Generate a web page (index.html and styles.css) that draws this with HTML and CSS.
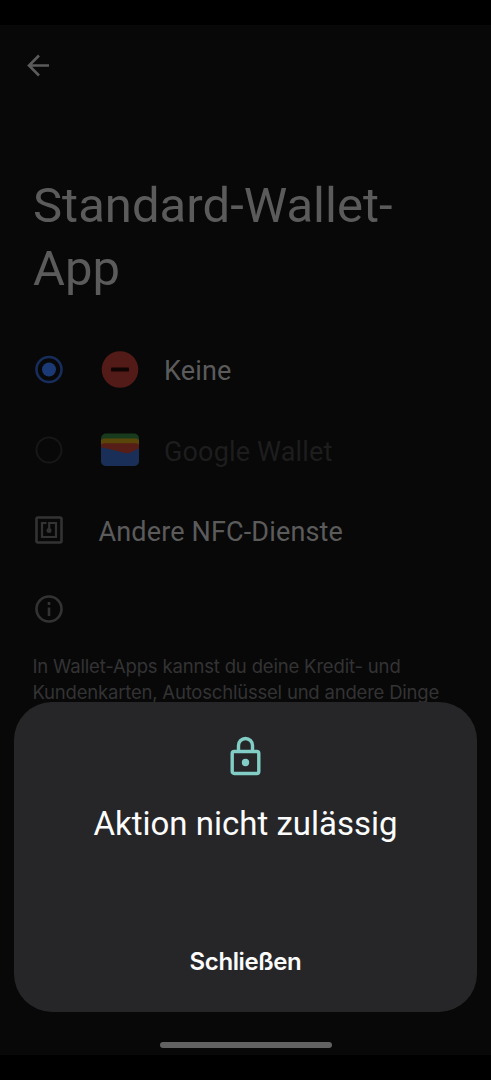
FILE: index.html
```html
<!DOCTYPE html>
<html lang="de">
<head>
<meta charset="utf-8">
<meta name="viewport" content="width=device-width, initial-scale=1">
<title>Standard-Wallet-App</title>
<link rel="stylesheet" href="styles.css">
</head>
<body>
<main class="screen">
  <header class="toolbar">
    <svg class="back" width="24" height="24" viewBox="0 0 24 24"><path d="M22 12.500H2.500M12 2.500 2 12.500 12 22.500"/></svg>
  </header>
  <h1 class="heading">Standard-Wallet-<br>App</h1>
  <ul class="options">
    <li class="row">
      <svg class="mark" width="28" height="28" viewBox="0 0 28 28"><circle class="radio-ring" cx="14" cy="13.500" r="12.500"/><circle class="radio-dot" cx="14" cy="13.500" r="7"/></svg>
      <svg class="app" width="40" height="40" viewBox="0 0 40 40"><circle cx="20" cy="19.500" r="18.300" fill="#531b17"/><rect x="11" y="17.500" width="18" height="4" rx=".5" fill="#100504"/></svg>
      <span class="label keine">Keine</span>
    </li>
    <li class="row disabled">
      <svg class="mark" width="28" height="28" viewBox="0 0 28 28"><circle class="radio-off" cx="14" cy="14" r="12.500"/></svg>
      <svg class="app" width="40" height="40" viewBox="0 0 40 40">
        <clipPath id="wallet"><rect x="1" y="3.500" width="38" height="32.500" rx="5"/></clipPath>
        <g clip-path="url(#wallet)">
          <path d="M0 0h40v40H0z" fill="#193b1d"/>
          <path d="M0 15V13q0-4.500 5-4.500h30q5 0 5 4.500v7H0z" fill="#5a4609"/>
          <path d="M0 19v-1q0-4.700 5-4.700h30q5 0 5 4.700v8H0z" fill="#571d17"/>
          <path d="M0 16.500q2 1.300 5 1.500l20 5q4 1 8-1.500l7-4V40H0z" fill="#192f57"/>
        </g>
      </svg>
      <span class="label google">Google Wallet</span>
    </li>
    <li class="row">
      <svg class="mark line" width="28" height="28" viewBox="0 0 28 28"><rect x="1.500" y="1.500" width="25" height="25" rx="1.500"/><path class="coil" d="M11.500 7H7v14h14V7H14.200v7"/><circle class="solid" cx="14" cy="14.500" r="2.500"/></svg>
      <span class="label nfc">Andere NFC-Dienste</span>
    </li>
    <li class="row">
      <svg class="mark line" width="28" height="28" viewBox="0 0 28 28"><circle cx="14" cy="13" r="12.500"/><path d="M14 11.500v8.500M14 6v3"/></svg>
    </li>
  </ul>
  <p class="info">In Wallet-Apps kannst du deine Kredit- und<br><span class="second">Kundenkarten, Autoschlüssel und andere Dinge</span></p>
  <div class="home-bar"></div>
</main>
<section class="dialog" role="dialog" aria-labelledby="dialog-title">
  <svg class="lock" width="30" height="39" viewBox="0 0 30 39"><rect x="1.200" y="14.500" width="26.600" height="22" rx="2"/><path d="M7.500 14.500V8.500a7 7 0 0 1 14 0v6"/><circle class="keyhole" cx="14.500" cy="25.500" r="3.700"/></svg>
  <h2 class="dialog-title" id="dialog-title">Aktion nicht zulässig</h2>
  <button class="close" type="button">Schließen</button>
</section>
</body>
</html>
```
FILE: styles.css
```css
* { box-sizing: border-box; }
body {
  margin: 0;
  padding: 25px 0;
  height: 1080px;
  overflow: hidden;
  position: relative;
  background: #000;
  font-family: Roboto, sans-serif;
}
.screen {
  height: 1030px;
  background: #080808;
  color: #5b5b5c;
  display: flex;
  flex-direction: column;
}
svg { fill: none; flex: none; overflow: visible; }
.toolbar { height: 149px; padding: 28px 27px; }
.back { display: block; stroke: #5b5b5c; stroke-width: 2.6; }
.heading {
  margin: 0;
  padding-left: 33px;
  font-size: 49px;
  line-height: 63px;
  font-weight: 400;
  letter-spacing: .03px;
}
.options { list-style: none; margin: 30px 0 0; padding: 0 35px; }
.row { height: 80px; display: flex; align-items: center; }
.radio-ring { stroke: #172d5c; stroke-width: 2.6; }
.radio-dot { fill: #1b3974; }
.radio-off { stroke: #171718; stroke-width: 2; }
.app { margin-left: 37px; }
.label { font-size: 27px; line-height: 32px; padding-top: 2px; white-space: nowrap; letter-spacing: .15px; }
.keine, .google { margin-left: 24px; }
.google, .nfc { padding-top: 4px; }
.nfc { margin-left: 35.500px; }
.disabled { color: #1d1d1e; }
.line { stroke: #333334; stroke-width: 2.6; }
.coil { stroke-width: 2.2; }
.solid { fill: #333334; stroke: none; }
.info {
  margin: 3px 0 0;
  padding-left: 32.500px;
  font-family: Inter, sans-serif;
  font-size: 18.500px;
  line-height: 26px;
  letter-spacing: -.17px;
  color: #333334;
  white-space: nowrap;
}
.second { letter-spacing: -.2px; }
.home-bar { width: 172px; height: 6px; margin: auto auto 7.500px; border-radius: 3px; background: #626263; }
.dialog {
  position: absolute;
  left: 14px;
  top: 702px;
  width: 463px;
  height: 310px;
  padding: 35px 0 30px;
  border-radius: 38px;
  background: #262628;
  display: flex;
  flex-direction: column;
  align-items: center;
}
.lock { stroke: #82cec6; stroke-width: 3.4; }
.keyhole { fill: #82cec6; stroke: none; }
.dialog-title { margin: 28px 0 0; color: #fcfcfd; font-size: 33px; line-height: 40px; font-weight: 400; white-space: nowrap; }
.close {
  margin: auto 0 0;
  padding: 0;
  border: 0;
  background: none;
  color: #fcfcfd;
  font-family: Inter, sans-serif;
  font-size: 24px;
  line-height: 40px;
  font-weight: 600;
  letter-spacing: -.4px;
}
```
